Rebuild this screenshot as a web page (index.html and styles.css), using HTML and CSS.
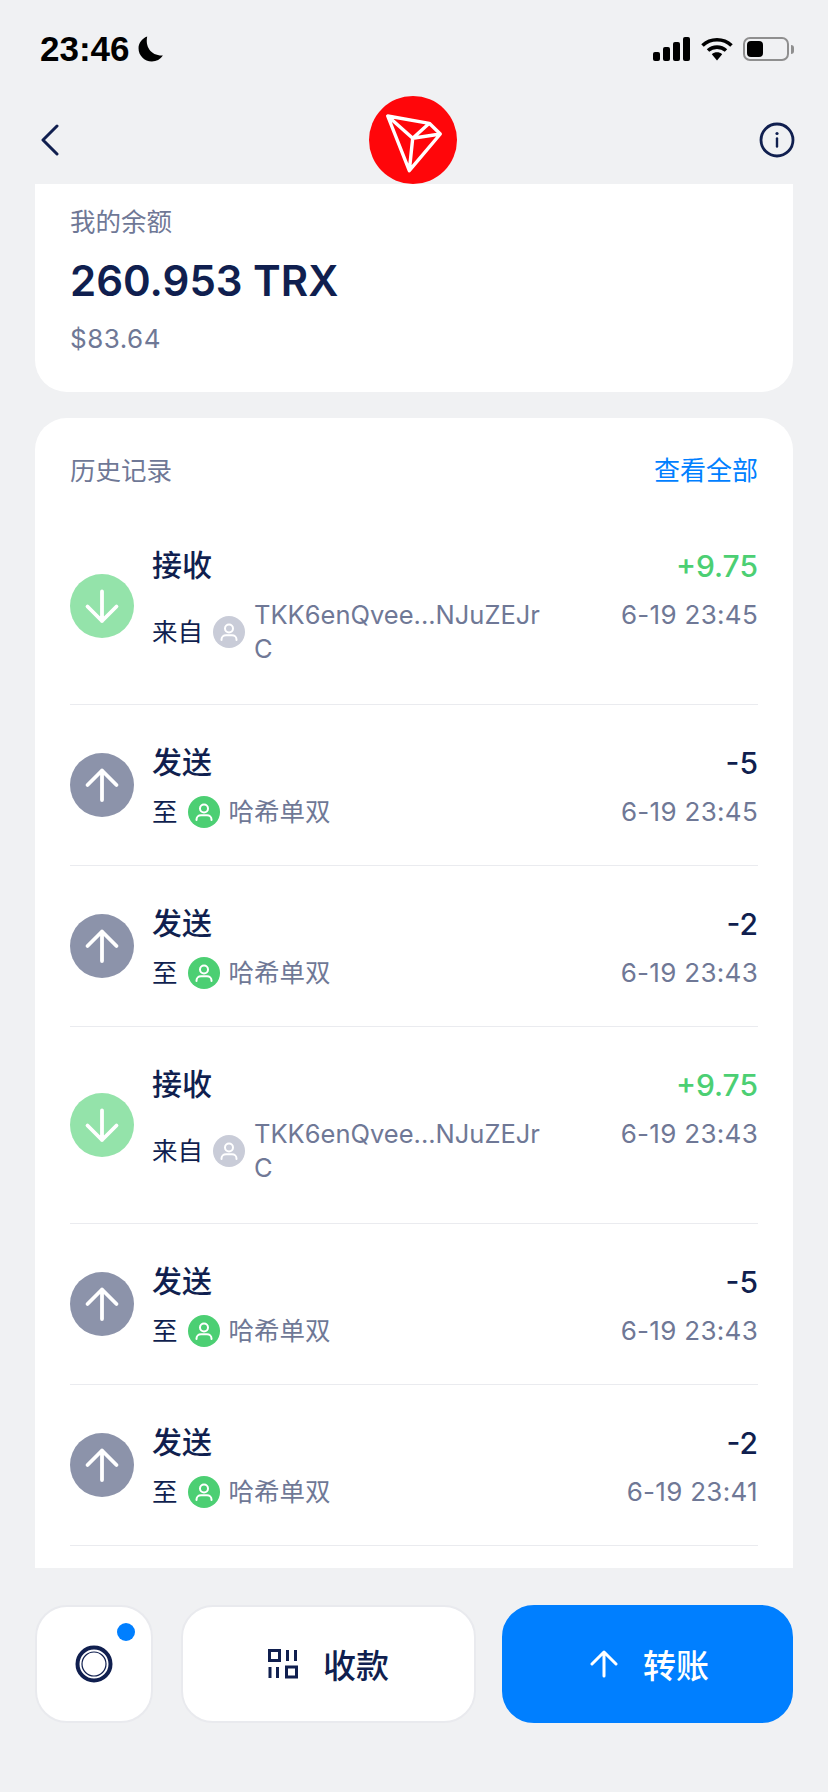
FILE: index.html
```html
<!DOCTYPE html>
<html lang="zh">
<head>
<meta charset="utf-8">
<title>TRX</title>
<link rel="stylesheet" href="styles.css">
</head>
<body>
<div class="app">
  <svg width="0" height="0" class="defs">
    <defs>
      <symbol id="person" viewBox="0 0 32 32">
        <circle cx="16" cy="12.5" r="4" fill="none" stroke="#fff" stroke-width="2"/>
        <path d="M8.5 24v-.5c0-2.600 2-4.200 4.500-4.200h6c2.500 0 4.500 1.600 4.500 4.200v.5" fill="none" stroke="#fff" stroke-width="2" stroke-linecap="round"/>
      </symbol>
      <symbol id="down" viewBox="0 0 64 64">
        <path d="M32 17.500v29.500M17.500 32.500 32 47 46.500 32.500" fill="none" stroke="#fff" stroke-width="3.800" stroke-linecap="round" stroke-linejoin="round"/>
      </symbol>
      <symbol id="up" viewBox="0 0 64 64">
        <path d="M32 47V17.500M17.500 32 32 17.500 46.500 32" fill="none" stroke="#fff" stroke-width="3.800" stroke-linecap="round" stroke-linejoin="round"/>
      </symbol>
    </defs>
  </svg>
  <header class="status">
    <div class="status-left">
      <span class="clock">23:46</span>
      <svg class="moon" width="26" height="26" viewBox="2 2 24 24"><path d="M10.500 2.500C8.500 12 14 20.500 25 20c-2.300 3.600-6 5.500-10.200 5.500C7.800 25.500 2.500 20 2.500 13.300 2.500 8.500 5.600 4.300 10.500 2.500z" fill="#000"/></svg>
    </div>
    <div class="status-right">
      <svg width="38" height="24" viewBox="0 0 38 24"><rect x="0" y="15" width="7" height="9" rx="2"/><rect x="10" y="10" width="7" height="14" rx="2"/><rect x="20" y="5" width="7" height="19" rx="2"/><rect x="30" y="0" width="7" height="24" rx="2"/></svg>
      <svg width="32" height="24" viewBox="0 0 32 24"><path d="M1.500 8.500C9.500.8 22.500.8 30.500 8.500" fill="none" stroke="#000" stroke-width="3.600"/><path d="M7 13.500c5-4.500 13-4.500 18 0" fill="none" stroke="#000" stroke-width="3.600"/><path d="M10.800 17.200c3-2.600 7.400-2.600 10.400 0L16 23.500z" fill="#000"/></svg>
      <div class="battery"><span class="battery-level"></span></div>
      <span class="battery-cap"></span>
    </div>
  </header>
  <nav class="nav">
    <svg class="nav-icon" width="27" height="32" viewBox="0 0 27 32"><path d="M18 2 4 16l14 14" fill="none" stroke="#101f4f" stroke-width="3" stroke-linecap="round" stroke-linejoin="round"/></svg>
    <div class="logo">
      <svg width="88" height="88" viewBox="0 0 88 88"><path d="M18.700 20 60.300 27.300 71.300 38 40.300 74.700zM18.700 20 43.700 42.300 40.300 74.700M43.700 42.300 60.300 27.300M43.700 42.300 71.300 38" fill="none" stroke="#fff" stroke-width="3.400" stroke-linejoin="round"/></svg>
    </div>
    <svg class="nav-icon" width="36" height="36" viewBox="0 0 36 36"><circle cx="18" cy="18" r="16" fill="none" stroke="#101f4f" stroke-width="2.800"/><path d="M18 16.500v8" stroke="#101f4f" stroke-width="2.400" stroke-linecap="round"/><circle cx="18" cy="11.500" r="1.600" fill="#101f4f"/></svg>
  </nav>
  <main class="content">
    <section class="card balance">
      <div class="label">我的余额</div>
      <div class="amount">260.953 TRX</div>
      <div class="fiat">$83.64</div>
    </section>
    <section class="card history">
      <div class="history-head">
        <span class="label">历史记录</span>
        <span class="link">查看全部</span>
      </div>
      <div class="row tall">
        <svg class="dir in" width="64" height="64"><use href="#down"/></svg>
        <div class="info">
          <div class="title">接收</div>
          <div class="sub"><span class="prep">来自</span><svg class="avatar grey" width="32" height="32"><use href="#person"/></svg><span class="addr">TKK6enQvee...NJuZEJrC</span></div>
        </div>
        <div class="side"><div class="val plus">+9.75</div><div class="time">6-19 23:45</div></div>
      </div>
      <div class="row">
        <svg class="dir out" width="64" height="64"><use href="#up"/></svg>
        <div class="info">
          <div class="title">发送</div>
          <div class="sub"><span class="prep">至</span><svg class="avatar green" width="32" height="32"><use href="#person"/></svg><span class="addr">哈希单双</span></div>
        </div>
        <div class="side"><div class="val">-5</div><div class="time">6-19 23:45</div></div>
      </div>
      <div class="row">
        <svg class="dir out" width="64" height="64"><use href="#up"/></svg>
        <div class="info">
          <div class="title">发送</div>
          <div class="sub"><span class="prep">至</span><svg class="avatar green" width="32" height="32"><use href="#person"/></svg><span class="addr">哈希单双</span></div>
        </div>
        <div class="side"><div class="val">-2</div><div class="time">6-19 23:43</div></div>
      </div>
      <div class="row tall">
        <svg class="dir in" width="64" height="64"><use href="#down"/></svg>
        <div class="info">
          <div class="title">接收</div>
          <div class="sub"><span class="prep">来自</span><svg class="avatar grey" width="32" height="32"><use href="#person"/></svg><span class="addr">TKK6enQvee...NJuZEJrC</span></div>
        </div>
        <div class="side"><div class="val plus">+9.75</div><div class="time">6-19 23:43</div></div>
      </div>
      <div class="row">
        <svg class="dir out" width="64" height="64"><use href="#up"/></svg>
        <div class="info">
          <div class="title">发送</div>
          <div class="sub"><span class="prep">至</span><svg class="avatar green" width="32" height="32"><use href="#person"/></svg><span class="addr">哈希单双</span></div>
        </div>
        <div class="side"><div class="val">-5</div><div class="time">6-19 23:43</div></div>
      </div>
      <div class="row">
        <svg class="dir out" width="64" height="64"><use href="#up"/></svg>
        <div class="info">
          <div class="title">发送</div>
          <div class="sub"><span class="prep">至</span><svg class="avatar green" width="32" height="32"><use href="#person"/></svg><span class="addr">哈希单双</span></div>
        </div>
        <div class="side"><div class="val">-2</div><div class="time">6-19 23:41</div></div>
      </div>
    </section>
  </main>
  <footer class="actions">
    <button class="btn btn-scan">
      <svg width="38" height="38" viewBox="0 0 38 38"><circle cx="19" cy="19" r="16.500" fill="none" stroke="#101f4f" stroke-width="4"/><circle cx="19" cy="19" r="12" fill="none" stroke="#101f4f" stroke-width="1.200"/></svg>
      <span class="dot"></span>
    </button>
    <button class="btn btn-receive">
      <svg width="30" height="30" viewBox="0 0 30 30" fill="none" stroke="#101f4f" stroke-width="3"><rect x="1.500" y="1.500" width="10" height="10"/><rect x="18.500" y="18" width="10" height="10"/><path d="M2 18v11M9.500 18v11M19.500 1v11M27.500 1v11"/></svg>
      <span>收款</span>
    </button>
    <button class="btn btn-send">
      <svg width="28" height="28" viewBox="0 0 28 28" fill="none" stroke="#fff" stroke-width="3" stroke-linecap="round" stroke-linejoin="round"><path d="M14 26V2M2 14 14 2l12 12"/></svg>
      <span>转账</span>
    </button>
  </footer>
</div>
</body>
</html>
```
FILE: styles.css
```css
* { box-sizing: border-box; }
html, body { margin: 0; padding: 0; }
body {
  background: #f0f1f3;
  font-family: Inter, "Noto Sans CJK SC", sans-serif;
  color: #101f4f;
}
.defs { position: absolute; }
.app {
  width: 828px;
  height: 1792px;
  display: flex;
  flex-direction: column;
  overflow: hidden;
}
.status {
  height: 96px;
  flex: none;
  padding: 27px 34px 0 40px;
  display: flex;
  justify-content: space-between;
  align-items: flex-start;
}
.status-left { display: flex; align-items: center; gap: 8px; }
.clock {
  font-family: "Liberation Sans", sans-serif;
  font-weight: 700;
  font-size: 35px;
  line-height: 44px;
  color: #000;
}
.moon { display: block; }
.status-right { display: flex; align-items: center; gap: 10px; padding-top: 10px; }
.battery {
  width: 46px;
  height: 24px;
  border: 2px solid #8f8f8f;
  border-radius: 7px;
  padding: 2px;
}
.battery-level {
  display: block;
  width: 16px;
  height: 16px;
  background: #000;
  border-radius: 4px;
}
.battery-cap {
  width: 3px;
  height: 9px;
  background: #8f8f8f;
  border-radius: 0 3px 3px 0;
  margin-left: -8px;
}
.nav {
  height: 88px;
  flex: none;
  padding: 0 33px 0 39px;
  display: flex;
  justify-content: space-between;
  align-items: center;
}
.nav-icon { display: block; }
.logo {
  width: 88px;
  height: 88px;
  border-radius: 50%;
  background: #ff060a;
}
.logo svg { display: block; }
.content {
  flex: 1;
  min-height: 0;
  overflow: hidden;
  padding: 0 35px;
  display: flex;
  flex-direction: column;
  gap: 26px;
}
.card { background: #fff; flex: none; }
.balance {
  height: 208px;
  border-radius: 0 0 32px 32px;
  padding: 20px 35px 0;
}
.label { font-size: 25.5px; line-height: 36px; color: #6f7896; }
.amount {
  font-size: 42px;
  line-height: 56px;
  font-weight: 600;
  margin-top: 13px;
}
.fiat { font-size: 26px; line-height: 36px; color: #6f7896; margin-top: 12px; letter-spacing: 0.5px; }
.history {
  flex: 1;
  min-height: 0;
  border-radius: 32px 32px 0 0;
  padding: 0 35px;
}
.history-head {
  height: 90px;
  padding-top: 16px;
  display: flex;
  justify-content: space-between;
  align-items: center;
}
.link { font-size: 26px; line-height: 36px; color: #007fff; }
.row {
  height: 161px;
  border-bottom: 1px solid #eaebef;
  display: flex;
  align-items: center;
}
.row.tall { height: 197px; }
.row:not(.tall) .info { padding-top: 2px; }
.dir { flex: none; border-radius: 50%; }
.dir.in { background: #94e3aa; }
.dir.out { background: #8c93aa; }
.info { width: 390px; margin-left: 18px; }
.title { font-size: 30px; line-height: 42px; font-weight: 500; }
.sub { display: flex; align-items: center; margin-top: 10px; }
.prep { font-size: 25.5px; line-height: 36px; flex: none; }
.avatar { flex: none; border-radius: 50%; margin: 2px 9px 2px 10px; }
.avatar.grey { background: #c9ccd8; }
.avatar.green { background: #4ccf73; }
.addr {
  font-size: 25.5px;
  line-height: 34px;
  padding: 2px 0;
  color: #6f7896;
  word-break: break-all;
  min-width: 0;
}
.side { margin-left: auto; text-align: right; align-self: flex-start; padding-top: 37px; }
.val { font-size: 30px; line-height: 42px; font-weight: 500; }
.val.plus { color: #4ccf73; }
.time { font-size: 26px; line-height: 36px; color: #6f7896; margin-top: 10px; letter-spacing: 0.3px; }
.actions {
  height: 224px;
  flex: none;
  padding: 37px 35px 0;
  display: flex;
  align-items: flex-start;
  background: #f0f1f3;
}
.btn {
  height: 118px;
  border: 2px solid #e9eaee;
  border-radius: 32px;
  background: #fff;
  font-family: inherit;
  font-size: 33px;
  font-weight: 500;
  color: #101f4f;
  display: flex;
  align-items: center;
  justify-content: center;
  gap: 25px;
  padding: 0;
}
.btn-scan { width: 118px; position: relative; }
.dot {
  position: absolute;
  top: 16px;
  right: 16px;
  width: 18px;
  height: 18px;
  border-radius: 50%;
  background: #007fff;
}
.btn-receive { width: 295px; margin-left: 28px; }
.btn-send {
  width: 291px;
  margin-left: 26px;
  background: #007fff;
  border-color: #007fff;
  color: #fff;
  padding-left: 4px;
}
```
